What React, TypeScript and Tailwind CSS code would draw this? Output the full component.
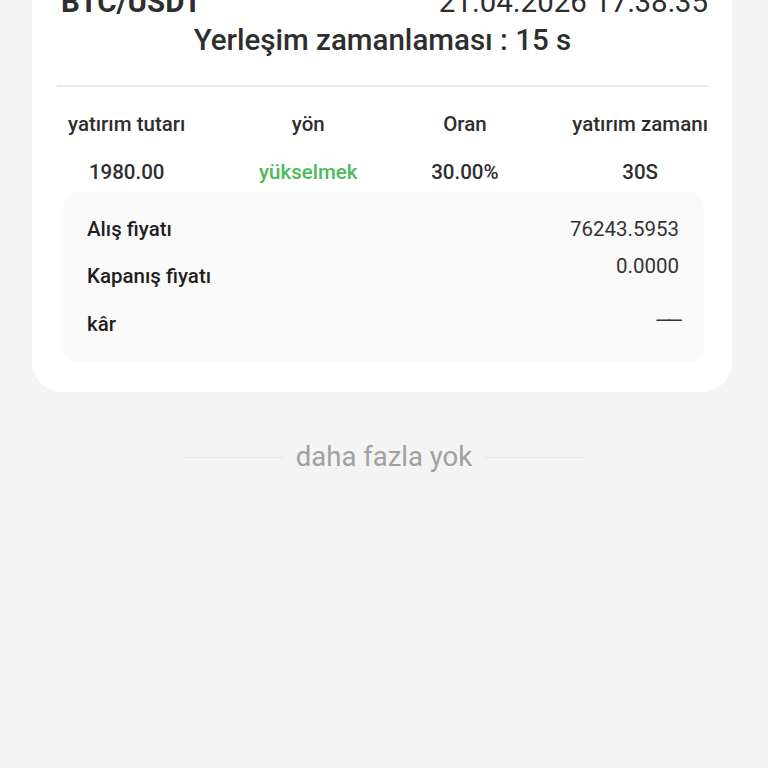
const COLUMNS = [
  { label: 'yatırım tutarı', value: '1980.00', tone: 'text-[#2e2e2e]' },
  { label: 'yön', value: 'yükselmek', tone: 'text-[#4cbb5b]' },
  { label: 'Oran', value: '30.00%', tone: 'text-[#2e2e2e]' },
  { label: 'yatırım zamanı', value: '30S', tone: 'text-[#2e2e2e]' },
]

export default function App() {
  return (
    <div className="min-h-screen overflow-hidden bg-[#f4f4f4] font-['Roboto',sans-serif]">
      <div className="ml-[32px] mr-[36px] -mt-[40px] rounded-[30px] bg-white pl-[25px] pr-[24px] pb-[29px] pt-[24px]">
        <div className="flex items-start justify-between text-[29.5px] leading-[36px] text-[#2e2e2e]">
          <span className="pl-[4px] font-bold">BTC/USDT</span>
          <span>21.04.2026 17:38:35</span>
        </div>
        <div className="mt-[2px] text-center text-[29.5px] font-medium leading-[36px] text-[#2e2e2e]">
          Yerleşim zamanlaması : 15 s
        </div>

        <div className="mt-[27px] h-[2px] bg-[#e8e8e8]" />

        <div className="mt-[23px] flex justify-between pl-[11px]">
          {COLUMNS.map(c => (
            <div key={c.label} className="flex flex-col items-center text-[20.5px] font-medium leading-[28px]">
              <span className="text-[#2e2e2e]">{c.label}</span>
              <span className={`mt-[20px] ${c.tone}`}>{c.value}</span>
            </div>
          ))}
        </div>

        <div className="ml-[6px] mr-[4px] mt-[6px] rounded-[16px] bg-[#fafafa] pl-[24px] pr-[25px] pb-[25px] pt-[23px] text-[20.5px] leading-[28px]">
          <div className="flex items-start justify-between">
            <span className="font-medium text-[#1f1f1f]">Alış fiyatı</span>
            <span className="text-[#333]">76243.5953</span>
          </div>
          <div className="mt-[9px] flex items-start justify-between">
            <span className="mt-[10px] font-medium text-[#1f1f1f]">Kapanış fiyatı</span>
            <span className="text-[#333]">0.0000</span>
          </div>
          <div className="mt-[20px] flex items-start justify-between">
            <span className="font-medium text-[#1f1f1f]">kâr</span>
            <span className="-mt-[3px] tracking-[-4px] text-[#333]">——</span>
          </div>
        </div>
      </div>

      <div className="mt-[49px] flex items-center justify-center gap-[12px]">
        <div className="h-px w-[100px] bg-[#e6e6e6]" />
        <span className="text-[27.5px] leading-[32px] text-[#a0a0a0]">daha fazla yok</span>
        <div className="h-px w-[100px] bg-[#e6e6e6]" />
      </div>
    </div>
  )
}
